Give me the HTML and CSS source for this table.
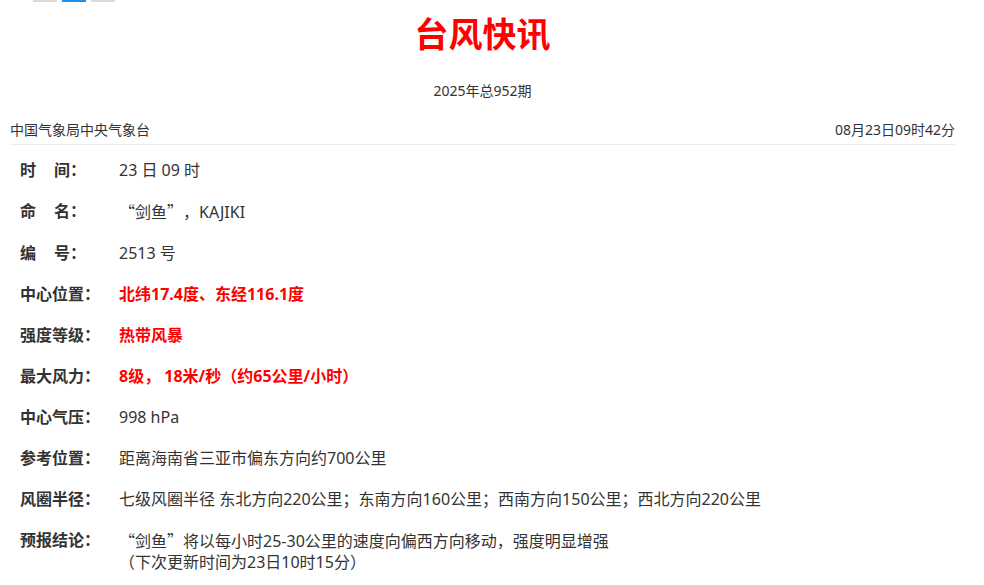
FILE: index.html
```html
<!DOCTYPE html>
<html lang="zh-CN">
<head>
    <meta charset="UTF-8">
    <meta name="viewport" content="width=device-width, initial-scale=1.0">
    <title>台风快讯</title>
    <link rel="stylesheet" href="styles.css">
</head>
<body>
    <div class="container">
        <div class="tabs">
            <span class="tab"></span>
            <span class="tab active"></span>
            <span class="tab"></span>
        </div>

        <h1 class="title">台风快讯</h1>
        <div class="issue">2025年总952期</div>

        <div class="meta">
            <span>中国气象局中央气象台</span>
            <span>08月23日09时42分</span>
        </div>

        <div class="info">
            <div class="row">
                <div class="label">时<span class="gap"></span>间：</div>
                <div class="value">23 日 09 时</div>
            </div>
            <div class="row">
                <div class="label">命<span class="gap"></span>名：</div>
                <div class="value"><span class="cjk">“</span>剑鱼<span class="cjk">”</span>，KAJIKI</div>
            </div>
            <div class="row">
                <div class="label">编<span class="gap"></span>号：</div>
                <div class="value">2513 号</div>
            </div>
            <div class="row">
                <div class="label">中心位置：</div>
                <div class="value red">北纬17.4度、东经116.1度</div>
            </div>
            <div class="row">
                <div class="label">强度等级：</div>
                <div class="value red">热带风暴</div>
            </div>
            <div class="row">
                <div class="label">最大风力：</div>
                <div class="value red">8级， 18米/秒（约65公里/小时）</div>
            </div>
            <div class="row">
                <div class="label">中心气压：</div>
                <div class="value">998 hPa</div>
            </div>
            <div class="row">
                <div class="label">参考位置：</div>
                <div class="value">距离海南省三亚市偏东方向约700公里</div>
            </div>
            <div class="row">
                <div class="label">风圈半径：</div>
                <div class="value">七级风圈半径 东北方向220公里；东南方向160公里；西南方向150公里；西北方向220公里</div>
            </div>
            <div class="row">
                <div class="label">预报结论：</div>
                <div class="value"><span class="cjk">“</span>剑鱼<span class="cjk">”</span>将以每小时25-30公里的速度向偏西方向移动，强度明显增强<br>（下次更新时间为23日10时15分）</div>
            </div>
        </div>
    </div>
</body>
</html>
```

FILE: styles.css
```css
* {
    box-sizing: border-box;
    margin: 0;
    padding: 0;
}

body {
    font-family: "Noto Sans", "Noto Sans CJK SC", sans-serif;
    color: #333;
    background: #fff;
    text-spacing-trim: space-all;
}

.container {
    width: 945px;
    margin-left: 10px;
}

.tabs {
    display: flex;
    gap: 5px;
    padding-left: 23px;
    height: 2px;
}

.tab {
    width: 24px;
    height: 2px;
    background: #d9d9d9;
}

.tab.active {
    background: #1e90e8;
}

.title {
    margin-top: 9px;
    text-align: center;
    font-size: 34px;
    line-height: 44px;
    font-weight: bold;
    color: #f00;
    font-family: "Noto Sans CJK SC", sans-serif;
}

.issue {
    margin-top: 26px;
    text-align: center;
    font-size: 14px;
    line-height: 20px;
}

.meta {
    margin-top: 19px;
    display: flex;
    justify-content: space-between;
    font-size: 14px;
    line-height: 20px;
    padding-bottom: 4px;
    border-bottom: 1px solid #ececec;
}

.info {
    margin-top: 5px;
    padding-left: 10px;
}

.row {
    display: flex;
    padding: 10px 0;
    font-size: 16px;
    line-height: 21px;
}

.label {
    width: 99px;
    flex-shrink: 0;
    font-weight: bold;
}

.label .gap {
    display: inline-block;
    width: 18px;
}

.value.red {
    color: #f00;
    font-weight: bold;
}

.cjk {
    font-family: "Noto Sans CJK SC", sans-serif;
}
```
